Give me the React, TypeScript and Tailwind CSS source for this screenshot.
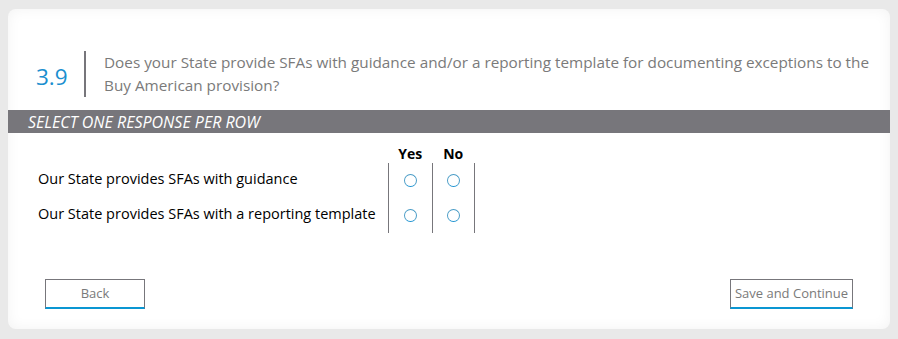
import { useState } from "react";

const rows = [
  { id: "guidance", label: "Our State provides SFAs with guidance" },
  { id: "template", label: "Our State provides SFAs with a reporting template" },
];

function Radio({ checked, onClick }: { checked: boolean; onClick: () => void }) {
  return (
    <button
      type="button"
      onClick={onClick}
      className="flex h-[13px] w-[13px] items-center justify-center rounded-full border-[1.5px] border-[#4a9cc6] border-b-[#1e93d0]"
    >
      {checked && <span className="h-[6px] w-[6px] rounded-full bg-[#2f95c9]" />}
    </button>
  );
}

export default function App() {
  const [answers, setAnswers] = useState<Record<string, string>>({});

  return (
    <div
      className="min-h-[339px] bg-[#e9e9e9] px-[8px] pt-[9px] pb-[10px]"
      style={{ fontFamily: '"Open Sans", "Noto Sans", sans-serif' }}
    >
      <div className="h-[320px] overflow-hidden rounded-[8px] bg-white shadow-[inset_0_0_14px_rgba(0,0,0,0.05)]">
        {/* Question header */}
        <div className="flex items-stretch pt-[42px] pl-[28px] pr-[2px]">
          <div className="flex w-[48px] shrink-0 items-center">
            <span className="pt-[6px] text-[22.5px] leading-none text-[#1b8fcf]">3.9</span>
          </div>
          <div className="w-[2px] shrink-0 bg-[#77767b]" />
          <p className="pl-[18px] text-[15.3px] leading-[23px] text-[#7a7a7a]">
            Does your State provide SFAs with guidance and/or a reporting template for documenting exceptions to the Buy American provision?
          </p>
        </div>

        {/* Instruction bar */}
        <div className="mt-[13px] flex h-[23px] items-center bg-[#77767b] pl-[20px] text-[16px] italic text-white">
          SELECT ONE RESPONSE PER ROW
        </div>

        {/* Response grid */}
        <table className="mt-[12px] ml-[30px] border-collapse">
          <thead>
            <tr className="h-[18px]">
              <th />
              <th className="w-[44px] text-[14px] font-bold leading-none text-black">Yes</th>
              <th className="w-[42px] text-[14px] font-bold leading-none text-black">No</th>
            </tr>
          </thead>
          <tbody>
            {rows.map((row) => (
              <tr key={row.id} className="h-[35px]">
                <td className="pr-[12px] pb-[3px] text-[14.5px] text-black">{row.label}</td>
                {["yes", "no"].map((v) => (
                  <td key={v} className="border-x border-[#77767b]">
                    <div className="flex justify-center">
                      <Radio
                        checked={answers[row.id] === v}
                        onClick={() => setAnswers({ ...answers, [row.id]: v })}
                      />
                    </div>
                  </td>
                ))}
              </tr>
            ))}
          </tbody>
        </table>

        {/* Navigation */}
        <div className="mt-[46px] flex justify-between px-[37px]">
          <button
            type="button"
            className="h-[30px] w-[100px] border border-b-2 border-[#77767b] border-b-[#0a96d2] text-[13px] text-[#7a7a7a]"
          >
            Back
          </button>
          <button
            type="button"
            className="h-[30px] w-[123px] border border-b-2 border-[#77767b] border-b-[#0a96d2] text-[13px] text-[#7a7a7a]"
          >
            Save and Continue
          </button>
        </div>
      </div>
    </div>
  );
}
